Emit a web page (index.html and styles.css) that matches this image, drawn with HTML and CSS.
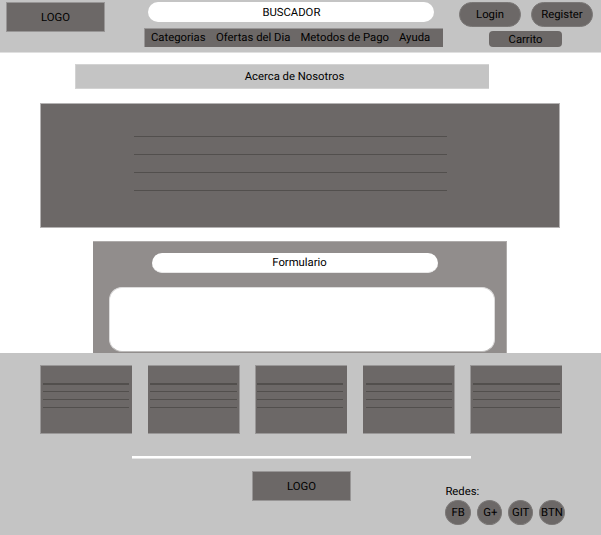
FILE: index.html
```html
<!DOCTYPE html>
<html lang="es">
<head>
<meta charset="utf-8">
<title>Acerca de Nosotros</title>
<link rel="stylesheet" href="styles.css">
</head>
<body>
<header class="header">
  <div class="logo"><span>LOGO</span></div>
  <div class="center">
    <div class="search"><span>BUSCADOR</span></div>
    <nav class="nav"><a class="cat">Categorias</a><a class="deals">Ofertas del Dia</a><a class="pay">Metodos de Pago</a><a class="help">Ayuda</a></nav>
  </div>
  <div class="account">
    <div class="buttons"><a class="btn">Login</a><a class="btn">Register</a></div>
    <a class="cart">Carrito</a>
  </div>
</header>
<main class="main">
  <h1 class="title">Acerca de Nosotros</h1>
  <section class="about"><i></i><i></i><i></i><i></i></section>
  <section class="form">
    <h2 class="form-title">Formulario</h2>
    <div class="form-box"></div>
  </section>
</main>
<footer class="footer">
  <div class="cards">
    <div class="card"><i></i><i></i><i></i><i></i></div>
    <div class="card c2"><i></i><i></i><i></i><i></i></div>
    <div class="card c3"><i></i><i></i><i></i><i></i></div>
    <div class="card c4"><i></i><i></i><i></i><i></i></div>
    <div class="card c5"><i></i><i></i><i></i><i></i></div>
  </div>
  <div class="divider"></div>
  <div class="bottom">
    <div class="logo"><span>LOGO</span></div>
    <div class="social">
      <p>Redes:</p>
      <div class="circles"><a>FB</a><a>G+</a><a>GIT</a><a>BTN</a></div>
    </div>
  </div>
</footer>
</body>
</html>
```
FILE: styles.css
```css
* { box-sizing: border-box; }
body {
  margin: 0;
  width: 601px;
  height: 535px;
  overflow: hidden;
  background: #fff;
  color: #000;
  font: 11.3px/16px Roboto, sans-serif;
  text-rendering: geometricPrecision;
}
h1, h2, p { margin: 0; font: inherit; }
i { display: block; height: 1px; background: #524f4d; }

.header {
  display: flex;
  height: 53px;
  padding: 2px 0 0 6px;
  background: #c4c4c4;
  border-bottom: 1px solid #e0e0e0;
}
.logo {
  display: flex;
  align-items: center;
  justify-content: center;
  width: 99px;
  height: 30px;
  padding-top: 2px;
  background: #6c6867;
  border: 1px solid #989696;
}
.center { width: 299px; margin-left: 39px; }
.search {
  width: 286px;
  height: 20px;
  margin-left: 4.4px;
  padding-top: 3px;
  border-radius: 10px;
  background: #fff;
  text-align: center;
}
.nav {
  display: flex;
  height: 19px;
  margin-top: 6px;
  padding: 1px 0 0 6px;
  background: #6c6867;
  border: solid #989696;
  border-width: 1px 0 0 1px;
  white-space: nowrap;
}
.cat { width: 65px; }
.deals { width: 84.5px; }
.pay { width: 98.5px; }

.account { margin-left: 16px; }
.buttons { display: flex; gap: 10px; }
.btn {
  width: 62px;
  height: 25px;
  padding-top: 4px;
  border: 1px solid #7b7877;
  border-radius: 13px;
  background: #6c6867;
  text-align: center;
}
.cart {
  display: block;
  width: 73px;
  height: 16px;
  margin: 4px 0 0 30px;
  padding-top: 1px;
  border-radius: 4px;
  background: #6c6867;
  text-align: center;
}

.main { height: 300px; padding-top: 11px; }
.title {
  width: 414px;
  height: 25px;
  margin-left: 75px;
  padding: 4px 0 0 24px;
  background: #c4c4c4;
  border: solid #d3d3d3;
  border-width: 1px 0 1px 1px;
  text-align: center;
}
.about {
  width: 520px;
  height: 125px;
  margin: 14px 0 0 40px;
  padding: 32px 112px 0 93px;
  border: 1px solid #b5b3b3;
  background: #6c6867;
}
.about i { margin-bottom: 17px; }
.form {
  width: 414px;
  height: 112px;
  margin: 13px 0 0 93px;
  padding-top: 11px;
  background: #918d8c;
  border: solid #aeabaa;
  border-width: 1px 1px 0 0;
}
.form-title {
  width: 286px;
  height: 20px;
  margin-left: 58.5px;
  padding-top: 2px;
  padding-left: 10px;
  border-radius: 10px;
  border-bottom: 1px solid #e8e7e7;
  background: #fff;
  text-align: center;
}
.form-box {
  width: 386px;
  height: 65px;
  margin: 14px 0 0 16px;
  border: 1px solid #dddcdc;
  border-bottom-color: #bdbbba;
  border-radius: 13px;
  background: #fff;
}

.footer { height: 182px; padding-top: 12px; background: #c4c4c4; }
.cards {
  display: grid;
  grid-template-columns: 108px 107px 108px 107px 92px;
  margin-left: 40px;
}
.card {
  width: 92px;
  height: 69px;
  padding: 17px 3px 0 2px;
  background: #6c6867;
  border: 1px solid #999797;
  border-right-width: 0;
}
.card i { margin-bottom: 7px; }
.card i:first-child { height: 2px; margin-bottom: 6px; }
.c2, .c4 { border-width: 1px 1px 1px 0; }
.c2 { padding-right: 2px; }
.c3 { padding: 17px 4px 0 1px; }
.c4 { padding-left: 3px; padding-right: 2px; }
.c5 { padding-right: 2px; }
.divider {
  width: 339px;
  height: 3px;
  margin: 22px 0 0 132px;
  background: #fff;
  border-bottom: 1px solid #e5e5e5;
}
.bottom { display: flex; padding: 12px 0 0 252px; }
.social { margin: 13px 0 0 94.4px; }
.circles { display: flex; gap: 6px; }
.circles a {
  width: 25.3px;
  height: 25px;
  padding-top: 4px;
  border: 1px solid #7b7877;
  border-radius: 50%;
  background: #6c6867;
  display: flex;
  justify-content: center;
}
.circles a:nth-child(2) { padding-left: 2px; }
```
